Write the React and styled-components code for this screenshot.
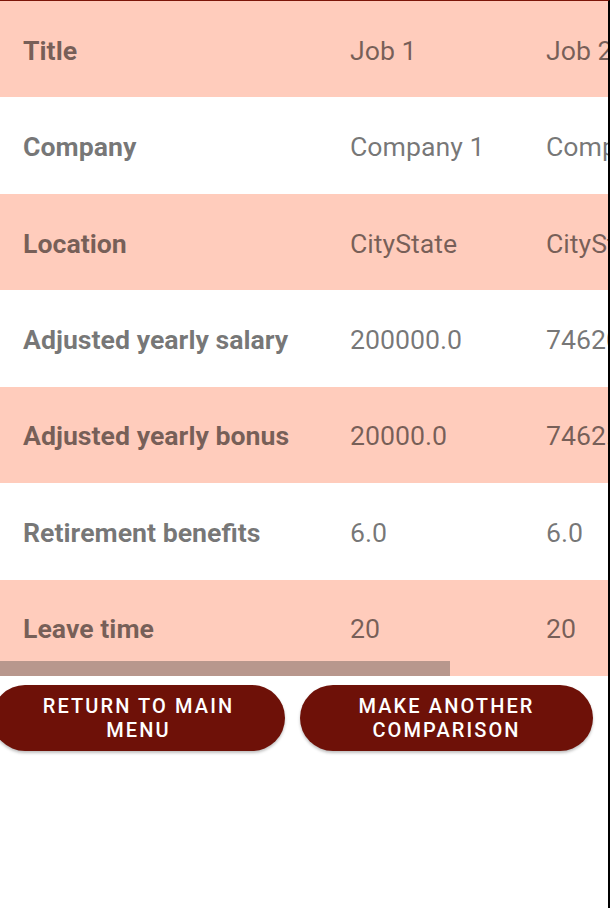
import styled, { createGlobalStyle } from "styled-components";

const GlobalStyle = createGlobalStyle`
  html, body {
    margin: 0;
    padding: 0;
    background: #fff;
  }
  body {
    font-family: Roboto, "Noto Sans", sans-serif;
  }
`;

const rows = [
  { label: "Title", values: ["Job 1", "Job 2"] },
  { label: "Company", values: ["Company 1", "Company 2"] },
  { label: "Location", values: ["CityState", "CityState"] },
  { label: "Adjusted yearly salary", values: ["200000.0", "74620.0"] },
  { label: "Adjusted yearly bonus", values: ["20000.0", "7462.0"] },
  { label: "Retirement benefits", values: ["6.0", "6.0"] },
  { label: "Leave time", values: ["20", "20"] },
];

const Screen = styled.div`
  width: 608px;
  height: 907px;
  border-top: 1px solid #7c1509;
  border-right: 2px solid #000;
  overflow: hidden;
  background: #fff;
`;

const TableScroll = styled.div`
  position: relative;
  width: 608px;
  overflow: hidden;
`;

const Table = styled.div`
  width: 822px;
  display: flex;
  flex-direction: column;
`;

const Row = styled.div`
  display: grid;
  grid-template-columns: 327px 196px 1fr;
  height: 96.43px;
  align-items: center;
  background: ${(p) => (p.$shaded ? "#ffccbc" : "#fff")};
`;

const Cell = styled.div`
  padding-left: 23px;
  padding-top: 3px;
  font-size: 26.7px;
  font-weight: ${(p) => (p.$head ? 700 : 400)};
  color: rgba(0, 0, 0, 0.54);
  white-space: nowrap;
`;

const ScrollThumb = styled.div`
  position: absolute;
  left: 0;
  bottom: 0;
  width: 450px;
  height: 15px;
  background: #b8978d;
`;

const Actions = styled.div`
  display: flex;
  gap: 15px;
  margin-top: 9px;
  margin-left: -8px;
`;

const Button = styled.button`
  width: 293px;
  height: 66px;
  border: none;
  border-radius: 33px;
  background: #6e1108;
  color: #fff;
  font-family: Roboto, "Noto Sans", sans-serif;
  font-size: 20px;
  font-weight: 500;
  letter-spacing: 2.1px;
  line-height: 24px;
  text-transform: uppercase;
  padding: 0 24px;
  box-shadow: 0 2px 3px rgba(0, 0, 0, 0.25);
`;

export default function App() {
  return (
    <>
      <GlobalStyle />
      <Screen>
        <TableScroll>
          <Table>
            {rows.map((r, i) => (
              <Row key={r.label} $shaded={i % 2 === 0}>
                <Cell $head>{r.label}</Cell>
                {r.values.map((v, j) => (
                  <Cell key={j}>{v}</Cell>
                ))}
              </Row>
            ))}
          </Table>
          <ScrollThumb />
        </TableScroll>
        <Actions>
          <Button>Return to main menu</Button>
          <Button>Make another comparison</Button>
        </Actions>
      </Screen>
    </>
  );
}
